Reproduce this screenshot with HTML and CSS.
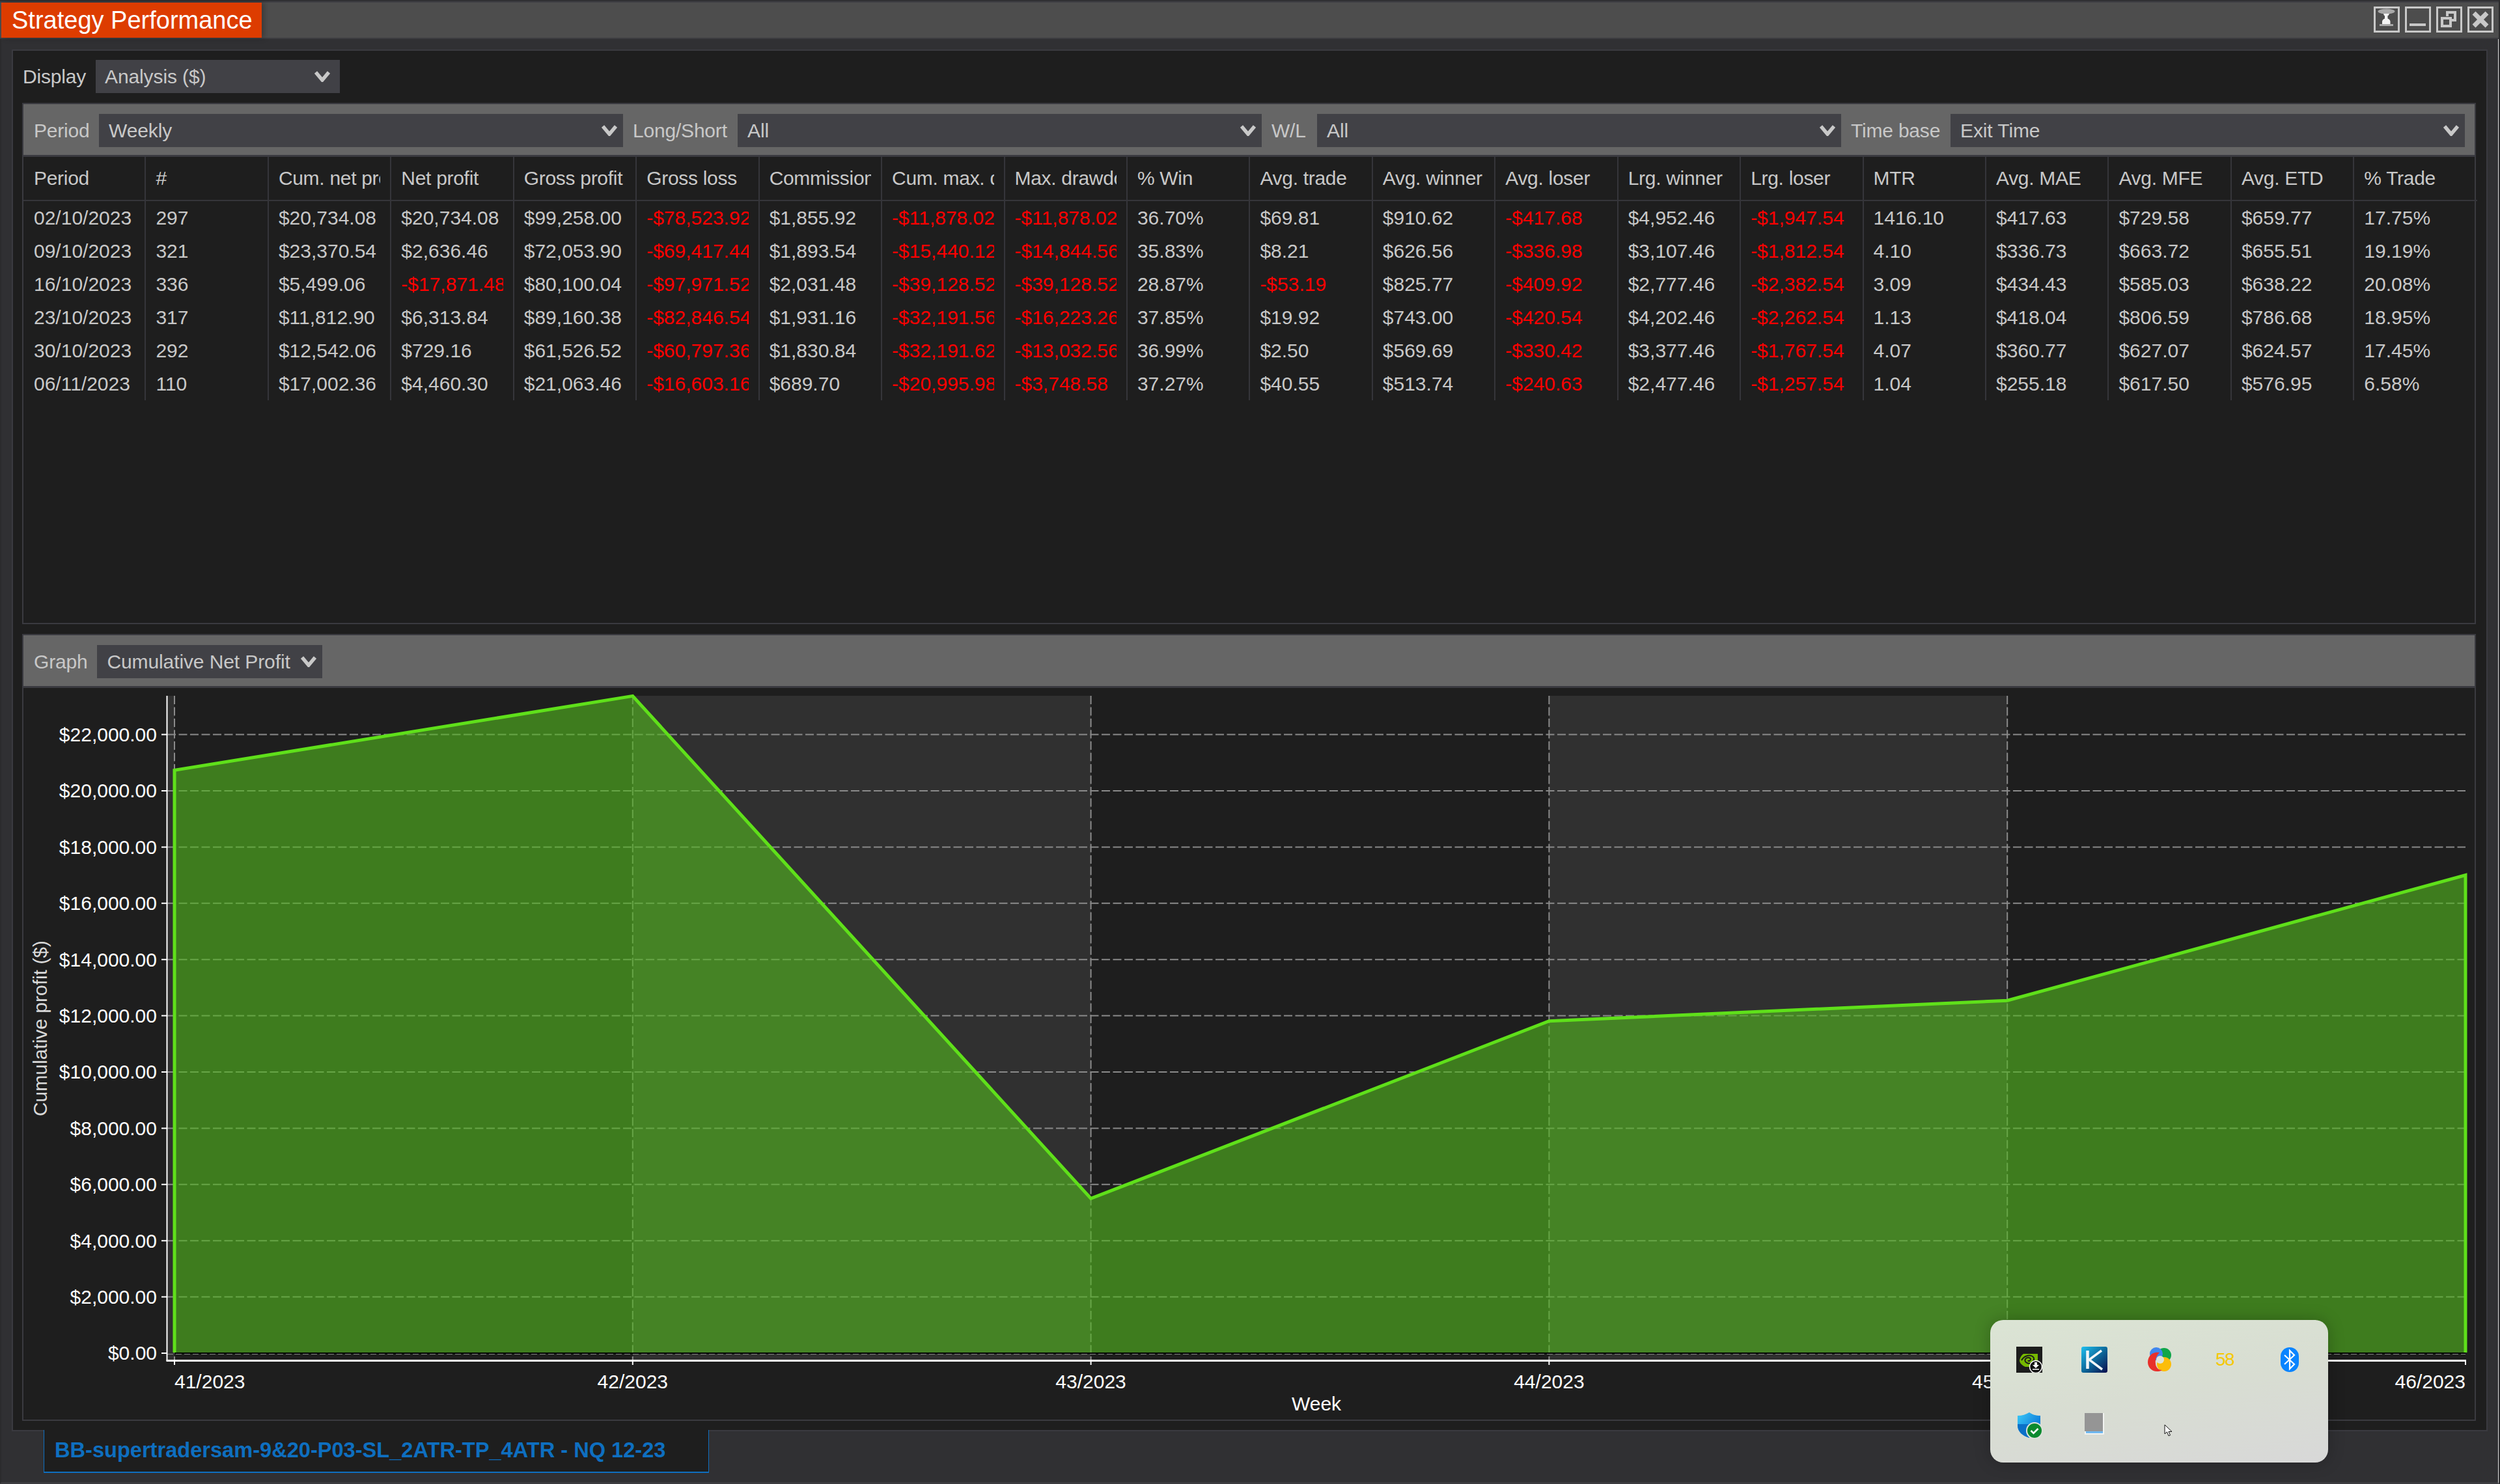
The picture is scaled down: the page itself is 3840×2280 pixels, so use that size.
FILE: index.html
```html
<!DOCTYPE html>
<html>
<head>
    <meta charset="utf-8">
    <title>Strategy Performance</title>
    <link rel="stylesheet" href="styles.css">
</head>
<body>
    <div class="window">
        <header class="title-bar">
            <div class="title-tab">Strategy Performance</div>
            <div class="win-buttons">
                <div class="win-btn">
                    <svg viewBox="3 3 34 34">
                        <ellipse class="pin-cap" cx="19.5" cy="7.5" rx="13" ry="4"/>
                        <path class="pin-body" d="M15 11h9l-1.5 3h-1v4.5c3 1 4 3 4 5V27H13v-3.5c0-2 1-4 4-5V14h-1z"/>
                        <rect class="pin-cap" x="9" y="27" width="21" height="3"/>
                    </svg>
                </div>
                <div class="win-btn">
                    <svg viewBox="3 3 34 34"><rect class="icon-fill" x="7" y="26" width="25" height="4"/></svg>
                </div>
                <div class="win-btn">
                    <svg viewBox="3 3 34 34">
                        <path class="icon-line" d="M17 15V9h12v12h-6"/>
                        <rect class="icon-line" x="9" y="18" width="13" height="12"/>
                    </svg>
                </div>
                <div class="win-btn">
                    <svg viewBox="3 3 34 34"><path class="icon-x" d="M10 10l20 20M30 10L10 30"/></svg>
                </div>
            </div>
        </header>

        <main class="content">
            <div class="frame">
                <div class="display-row">
                    <span class="label">Display</span>
                    <div class="select select-display">
                        <span>Analysis ($)</span>
                        <svg class="chev" viewBox="0 0 24 17"><path d="M2 2l10 12L22 2"/></svg>
                    </div>
                </div>

                <section class="panel table-panel">
                    <div class="bar filter-bar">
                        <span class="label lbl-period">Period</span>
                        <div class="select select-wide">
                            <span>Weekly</span>
                            <svg class="chev" viewBox="0 0 24 17"><path d="M2 2l10 12L22 2"/></svg>
                        </div>
                        <span class="label lbl-side">Long/Short</span>
                        <div class="select select-wide">
                            <span>All</span>
                            <svg class="chev" viewBox="0 0 24 17"><path d="M2 2l10 12L22 2"/></svg>
                        </div>
                        <span class="label lbl-wl">W/L</span>
                        <div class="select select-wide">
                            <span>All</span>
                            <svg class="chev" viewBox="0 0 24 17"><path d="M2 2l10 12L22 2"/></svg>
                        </div>
                        <span class="label lbl-time">Time base</span>
                        <div class="select select-fill">
                            <span>Exit Time</span>
                            <svg class="chev" viewBox="0 0 24 17"><path d="M2 2l10 12L22 2"/></svg>
                        </div>
                    </div>

                    <table class="perf-table">
                        <thead>
                            <tr>
                                <th><div>Period</div></th><th><div>#</div></th><th><div>Cum. net profit</div></th><th><div>Net profit</div></th><th><div>Gross profit</div></th><th><div>Gross loss</div></th><th><div>Commission</div></th><th><div>Cum. max. drawdown</div></th><th><div>Max. drawdown</div></th><th><div>% Win</div></th><th><div>Avg. trade</div></th><th><div>Avg. winner</div></th><th><div>Avg. loser</div></th><th><div>Lrg. winner</div></th><th><div>Lrg. loser</div></th><th><div>MTR</div></th><th><div>Avg. MAE</div></th><th><div>Avg. MFE</div></th><th><div>Avg. ETD</div></th><th><div>% Trade</div></th>
                            </tr>
                        </thead>
                        <tbody>
                            <tr>
                                <td><div>02/10/2023</div></td><td><div>297</div></td><td><div>$20,734.08</div></td><td><div>$20,734.08</div></td><td><div>$99,258.00</div></td><td class="neg"><div>-$78,523.92</div></td><td><div>$1,855.92</div></td><td class="neg"><div>-$11,878.02</div></td><td class="neg"><div>-$11,878.02</div></td><td><div>36.70%</div></td><td><div>$69.81</div></td><td><div>$910.62</div></td><td class="neg"><div>-$417.68</div></td><td><div>$4,952.46</div></td><td class="neg"><div>-$1,947.54</div></td><td><div>1416.10</div></td><td><div>$417.63</div></td><td><div>$729.58</div></td><td><div>$659.77</div></td><td><div>17.75%</div></td>
                            </tr>
                            <tr>
                                <td><div>09/10/2023</div></td><td><div>321</div></td><td><div>$23,370.54</div></td><td><div>$2,636.46</div></td><td><div>$72,053.90</div></td><td class="neg"><div>-$69,417.44</div></td><td><div>$1,893.54</div></td><td class="neg"><div>-$15,440.12</div></td><td class="neg"><div>-$14,844.56</div></td><td><div>35.83%</div></td><td><div>$8.21</div></td><td><div>$626.56</div></td><td class="neg"><div>-$336.98</div></td><td><div>$3,107.46</div></td><td class="neg"><div>-$1,812.54</div></td><td><div>4.10</div></td><td><div>$336.73</div></td><td><div>$663.72</div></td><td><div>$655.51</div></td><td><div>19.19%</div></td>
                            </tr>
                            <tr>
                                <td><div>16/10/2023</div></td><td><div>336</div></td><td><div>$5,499.06</div></td><td class="neg"><div>-$17,871.48</div></td><td><div>$80,100.04</div></td><td class="neg"><div>-$97,971.52</div></td><td><div>$2,031.48</div></td><td class="neg"><div>-$39,128.52</div></td><td class="neg"><div>-$39,128.52</div></td><td><div>28.87%</div></td><td class="neg"><div>-$53.19</div></td><td><div>$825.77</div></td><td class="neg"><div>-$409.92</div></td><td><div>$2,777.46</div></td><td class="neg"><div>-$2,382.54</div></td><td><div>3.09</div></td><td><div>$434.43</div></td><td><div>$585.03</div></td><td><div>$638.22</div></td><td><div>20.08%</div></td>
                            </tr>
                            <tr>
                                <td><div>23/10/2023</div></td><td><div>317</div></td><td><div>$11,812.90</div></td><td><div>$6,313.84</div></td><td><div>$89,160.38</div></td><td class="neg"><div>-$82,846.54</div></td><td><div>$1,931.16</div></td><td class="neg"><div>-$32,191.56</div></td><td class="neg"><div>-$16,223.26</div></td><td><div>37.85%</div></td><td><div>$19.92</div></td><td><div>$743.00</div></td><td class="neg"><div>-$420.54</div></td><td><div>$4,202.46</div></td><td class="neg"><div>-$2,262.54</div></td><td><div>1.13</div></td><td><div>$418.04</div></td><td><div>$806.59</div></td><td><div>$786.68</div></td><td><div>18.95%</div></td>
                            </tr>
                            <tr>
                                <td><div>30/10/2023</div></td><td><div>292</div></td><td><div>$12,542.06</div></td><td><div>$729.16</div></td><td><div>$61,526.52</div></td><td class="neg"><div>-$60,797.36</div></td><td><div>$1,830.84</div></td><td class="neg"><div>-$32,191.62</div></td><td class="neg"><div>-$13,032.56</div></td><td><div>36.99%</div></td><td><div>$2.50</div></td><td><div>$569.69</div></td><td class="neg"><div>-$330.42</div></td><td><div>$3,377.46</div></td><td class="neg"><div>-$1,767.54</div></td><td><div>4.07</div></td><td><div>$360.77</div></td><td><div>$627.07</div></td><td><div>$624.57</div></td><td><div>17.45%</div></td>
                            </tr>
                            <tr>
                                <td><div>06/11/2023</div></td><td><div>110</div></td><td><div>$17,002.36</div></td><td><div>$4,460.30</div></td><td><div>$21,063.46</div></td><td class="neg"><div>-$16,603.16</div></td><td><div>$689.70</div></td><td class="neg"><div>-$20,995.98</div></td><td class="neg"><div>-$3,748.58</div></td><td><div>37.27%</div></td><td><div>$40.55</div></td><td><div>$513.74</div></td><td class="neg"><div>-$240.63</div></td><td><div>$2,477.46</div></td><td class="neg"><div>-$1,257.54</div></td><td><div>1.04</div></td><td><div>$255.18</div></td><td><div>$617.50</div></td><td><div>$576.95</div></td><td><div>6.58%</div></td>
                            </tr>
                        </tbody>
                    </table>
                </section>

                <section class="panel chart-panel">
                    <div class="bar graph-bar">
                        <span class="label">Graph</span>
                        <div class="select select-graph">
                            <span>Cumulative Net Profit</span>
                            <svg class="chev" viewBox="0 0 24 17"><path d="M2 2l10 12L22 2"/></svg>
                        </div>
                    </div>

                    <!-- viewBox uses page coordinates so the plot numbers are easy to check -->
                    <svg class="chart" viewBox="36 1057 3766 1124">
                        <rect class="band" x="257" y="1069" width="11" height="1020"/>
                        <rect class="band" x="971.8" y="1069" width="703.8" height="1020"/>
                        <rect class="band" x="2379.4" y="1069" width="703.8" height="1020"/>

                        <path class="grid" d="M257 1128.6H3787M257 1215H3787M257 1301.4H3787M257 1387.8H3787M257 1474.2H3787M257 1560.6H3787M257 1647H3787M257 1733.4H3787M257 1819.8H3787M257 1906.2H3787M257 1992.6H3787"/>
                        <path class="grid" d="M268 1069V2089M971.8 1069V2089M1675.6 1069V2089M2379.4 1069V2089M3083.2 1069V2089"/>
                        <path class="grid-zero" d="M257 2080.5H3787"/>

                        <path class="area" d="M268 2078V1183.3L971.8 1069.4L1675.6 1841.4L2379.4 1568.7L3083.2 1537.2L3787 1344.5V2078Z"/>
                        <path class="area-base" d="M268 2079H3787"/>
                        <path class="area-line" d="M268 2078V1183.3L971.8 1069.4L1675.6 1841.4L2379.4 1568.7L3083.2 1537.2L3787 1344.5V2078"/>

                        <path class="axis" d="M256.5 1069V2091"/>
                        <path class="axis axis-x" d="M255.5 2090.5H3788"/>
                        <path class="tick" d="M248 1128.6h8M248 1215h8M248 1301.4h8M248 1387.8h8M248 1474.2h8M248 1560.6h8M248 1647h8M248 1733.4h8M248 1819.8h8M248 1906.2h8M248 1992.6h8M248 2079h8"/>
                        <path class="tick" d="M268 2091v6M971.8 2091v6M1675.6 2091v6M2379.4 2091v6M3083.2 2091v6M3787 2091v6"/>

                        <text class="y-label" x="241" y="1139">$22,000.00</text>
                        <text class="y-label" x="241" y="1225.4">$20,000.00</text>
                        <text class="y-label" x="241" y="1311.8">$18,000.00</text>
                        <text class="y-label" x="241" y="1398.2">$16,000.00</text>
                        <text class="y-label" x="241" y="1484.6">$14,000.00</text>
                        <text class="y-label" x="241" y="1571">$12,000.00</text>
                        <text class="y-label" x="241" y="1657.4">$10,000.00</text>
                        <text class="y-label" x="241" y="1743.8">$8,000.00</text>
                        <text class="y-label" x="241" y="1830.2">$6,000.00</text>
                        <text class="y-label" x="241" y="1916.6">$4,000.00</text>
                        <text class="y-label" x="241" y="2003">$2,000.00</text>
                        <text class="y-label" x="241" y="2089.4">$0.00</text>

                        <text class="x-label x-start" x="268" y="2132.5">41/2023</text>
                        <text class="x-label" x="971.8" y="2132.5">42/2023</text>
                        <text class="x-label" x="1675.6" y="2132.5">43/2023</text>
                        <text class="x-label" x="2379.4" y="2132.5">44/2023</text>
                        <text class="x-label" x="3083.2" y="2132.5">45/2023</text>
                        <text class="x-label x-end" x="3787" y="2132.5">46/2023</text>
                        <text class="x-label" x="2022" y="2166.5">Week</text>
                        <text class="y-title" transform="translate(72 1580) rotate(-90)">Cumulative profit ($)</text>
                    </svg>
                </section>
            </div>

            <div class="tab">BB-supertradersam-9&amp;20-P03-SL_2ATR-TP_4ATR - NQ 12-23</div>
        </main>
    </div>

    <!-- system tray overflow popup -->
    <div class="tray">
        <div class="tray-cell">
            <svg class="tray-icon" viewBox="0 0 40 40">
                <rect width="40" height="40" fill="#1c1c1c"/>
                <path d="M11 11H33V31H14C9 29 5 25 5 21C6 16 8 13 11 11Z" fill="#76b900"/>
                <path d="M8 21C12 14 20 12 25 15C29 18 27 24 21 26C16 26 12 23 14 19C16 16 21 16 22 19C22 22 19 23 18 21" fill="none" stroke="#1c1c1c" stroke-width="2"/>
                <circle cx="30" cy="31" r="9.5" fill="#111" stroke="#fff" stroke-width="1.5"/>
                <path d="M28 24h4v4h3l-5 5-5-5h3z" fill="#fff"/>
                <rect x="25" y="34" width="10" height="1.5" fill="#fff"/>
            </svg>
        </div>
        <div class="tray-cell">
            <svg class="tray-icon" viewBox="0 0 40 40">
                <defs>
                    <linearGradient id="kBlue" x1="0" y1="0" x2="1" y2="1">
                        <stop offset="0" stop-color="#1fc0f0"/>
                        <stop offset="0.5" stop-color="#0d6a9c"/>
                        <stop offset="1" stop-color="#0a0d4c"/>
                    </linearGradient>
                </defs>
                <rect width="40" height="40" rx="3" fill="url(#kBlue)"/>
                <path d="M9.5 6V34" fill="none" stroke="#f2f6f8" stroke-width="4.5"/>
                <path d="M31 6L12 20L32 35" fill="none" stroke="#f2f6f8" stroke-width="3.5"/>
            </svg>
        </div>
        <div class="tray-cell">
            <svg class="tray-icon" viewBox="0 0 40 40">
                <circle cx="27" cy="13" r="11" fill="#10a64a"/>
                <circle cx="15" cy="11" r="10" fill="#3f86ee"/>
                <circle cx="27" cy="27" r="11" fill="#fcbd0a"/>
                <path d="M20 9C10 7 2 14 2 24C2 33 10 39 18 38C20 38 22 37 24 36C18 36 14 31 14 26C13 20 15 14 20 9Z" fill="#e8302a"/>
                <circle cx="21" cy="20" r="6" fill="#dde2d9"/>
            </svg>
        </div>
        <div class="tray-cell"><span class="tray-number">58</span></div>
        <div class="tray-cell">
            <svg class="tray-bt" viewBox="0 0 28 38">
                <rect width="28" height="38" rx="14" fill="#0a84ff"/>
                <path d="M6 12L21 26L14 33V5L21 12L6 26" fill="none" stroke="#fff" stroke-width="2.2"/>
            </svg>
        </div>
        <div class="tray-cell">
            <svg class="tray-icon" viewBox="0 0 40 40">
                <defs>
                    <linearGradient id="shieldBlue" x1="0" y1="0" x2="0.8" y2="0.6">
                        <stop offset="0" stop-color="#3ccaf7"/>
                        <stop offset="1" stop-color="#0f7fdc"/>
                    </linearGradient>
                </defs>
                <path d="M20 0C24 3 30 5 37 5V20C37 30 28 36 20 39C10 36 2 30 2 20V5C9 5 15 3 20 0Z" fill="url(#shieldBlue)"/>
                <path d="M2 18H20V39C10 36 2 30 2 20Z" fill="#0b70c8"/>
                <circle cx="28" cy="28" r="13" fill="#dde2da"/>
                <circle cx="28" cy="28" r="11" fill="#0b8a2e"/>
                <path d="M22.5 28l4 4 7-7" fill="none" stroke="#fff" stroke-width="2.6"/>
            </svg>
        </div>
        <div class="tray-cell">
            <svg class="tray-icon" viewBox="0 0 40 40">
                <rect x="5" y="1" width="30" height="33" fill="#f1f3f1"/>
                <rect x="5" y="1" width="28" height="28" fill="#959595"/>
                <rect x="7" y="29" width="26" height="3" fill="#6fb8f0"/>
            </svg>
        </div>
        <svg class="cursor" viewBox="0 0 13 19">
            <path d="M1 1V15L4.5 12L7 18L9.5 17L7 11.5H12Z" fill="#fff" stroke="#111" stroke-width="1"/>
        </svg>
    </div>
</body>
</html>
```

FILE: styles.css
```css
* {
    box-sizing: border-box;
}

html, body {
    margin: 0;
    padding: 0;
}

body {
    width: 3840px;
    height: 2280px;
    overflow: hidden;
    position: relative;
    background: #2b2b2d;
    font-family: "Liberation Sans", Arial, sans-serif;
    font-size: 30px;
    color: #c8c8c8;
}

.window {
    width: 3838px;
    height: 2280px;
    display: flex;
    flex-direction: column;
    padding-top: 2px;
    background: #303033;
}

/* title bar */
.title-bar {
    height: 58px;
    flex: none;
    display: flex;
    align-items: flex-start;
    justify-content: space-between;
    background: #4d4d4d;
    border-top: 2px solid #3f3f44;
    border-bottom: 2px solid #3c3c40;
}

.title-tab {
    height: 54px;
    width: 400px;
    margin-left: 2px;
    padding-left: 16px;
    line-height: 54px;
    font-size: 38px;
    color: #fff;
    background: #dd3c00;
    box-shadow: 4px 0 8px rgba(0,0,0,0.25);
}

.win-buttons {
    display: flex;
    gap: 8px;
    margin: 6px 8px 0 0;
}

.win-btn {
    width: 40px;
    height: 40px;
    border: 3px solid #c8c8c8;
}

.win-btn svg {
    display: block;
    width: 34px;
    height: 34px;
}

.icon-fill {
    fill: #c8c8c8;
}

.icon-line {
    fill: #4d4d4d;
    stroke: #c8c8c8;
    stroke-width: 4;
}

.icon-x {
    fill: none;
    stroke: #c8c8c8;
    stroke-width: 7;
}

.pin-cap {
    fill: #a8a8a8;
}

.pin-body {
    fill: #f4f4f4;
}

/* main area */
.content {
    flex: 1;
    padding: 16px 16px 0 16px;
    border-right: 1px solid #dcdcdc;
    border-bottom: 3px solid #3c3c40;
    border-left: 2px solid #2b2b2d;
    display: flex;
    flex-direction: column;
}

.frame {
    height: 2123px;
    flex: none;
    display: flex;
    flex-direction: column;
    padding: 14px 16px 14px 14px;
    background: #1e1e1e;
    border: 2px solid #3a3a40;
}

.display-row {
    display: flex;
    align-items: center;
    gap: 15px;
    height: 51px;
    margin-bottom: 15px;
    padding-left: 1px;
    flex: none;
}

.label {
    white-space: nowrap;
    flex: none;
    letter-spacing: -0.2px;
}

.lbl-period {
    width: 85px;
}

.lbl-side {
    width: 146px;
}

.lbl-wl {
    width: 55px;
}

.lbl-time {
    width: 138px;
}

.select {
    height: 51px;
    flex: none;
    display: flex;
    align-items: center;
    justify-content: space-between;
    padding: 0 9px 0 15px;
    background: #414146;
    color: #c8c8c8;
    letter-spacing: -0.1px;
}

.select-display {
    width: 375px;
    padding: 0 15px 0 14px;
}

.select-wide {
    width: 805px;
}

.select-fill {
    flex: 1;
}

.select-graph {
    width: 346px;
}

.chev {
    width: 24px;
    height: 17px;
    flex: none;
    margin-top: -1px;
}

.chev path {
    fill: none;
    stroke: #c8c8c8;
    stroke-width: 5.5;
}

.panel {
    border: 2px solid #3a3a40;
    flex: none;
}

.table-panel {
    height: 801px;
    margin-bottom: 15px;
}

.chart-panel {
    flex: 1;
    display: flex;
    flex-direction: column;
}

.bar {
    display: flex;
    align-items: center;
    gap: 15px;
    background: #666;
    border-bottom: 3px solid #3a3a40;
    padding: 15px 15px 12px 16px;
    flex: none;
}

/* table */
.perf-table {
    width: 3769px;
    table-layout: fixed;
    border-collapse: separate;
    border-spacing: 0;
}

.perf-table th,
.perf-table td {
    padding: 0 15px 0 15px;
    border-right: 2px solid #35353a;
    font-weight: normal;
    text-align: left;
    white-space: nowrap;
}

.perf-table th:first-child,
.perf-table td:first-child {
    padding-left: 16px;
}

.perf-table th:last-child,
.perf-table td:last-child {
    border-right: 0;
}

.perf-table th {
    height: 68px;
    border-bottom: 2px solid #35353a;
    letter-spacing: -0.3px;
}

.perf-table td {
    height: 51px;
}

.perf-table th div,
.perf-table td div {
    overflow: hidden;
}

.perf-table .neg {
    color: #ff0000;
}

/* chart */
.chart {
    display: block;
    width: 3766px;
    height: 1124px;
    flex: none;
}

.band {
    fill: #303030;
}

.grid {
    fill: none;
    stroke: #8a8a8a;
    stroke-width: 2;
    stroke-dasharray: 13 4.5;
}

.grid-zero {
    fill: none;
    stroke: #8a8a8a;
    stroke-width: 1;
    stroke-dasharray: 9 4;
}

.area {
    fill: rgba(83,183,30,0.62);
}

.area-base {
    stroke: #000;
    stroke-width: 2;
}

.area-line {
    fill: none;
    stroke: #5fe01a;
    stroke-width: 5;
}

.axis {
    fill: none;
    stroke: #fff;
    stroke-width: 2;
}

.axis-x {
    stroke-width: 3;
}

.tick {
    fill: none;
    stroke: #fff;
    stroke-width: 2;
}

.chart text {
    font-family: "Liberation Sans", Arial, sans-serif;
    font-size: 30px;
    fill: #fff;
}

.chart .y-label {
    text-anchor: end;
}

.chart .x-label {
    text-anchor: middle;
}

.chart .x-start {
    text-anchor: start;
}

.chart .x-end {
    text-anchor: end;
}

.chart .y-title {
    text-anchor: middle;
    fill: #d8d8d8;
}

/* strategy tab under the frame */
.tab {
    width: 1022px;
    height: 66px;
    margin: -2px 0 0 49px;
    padding-left: 16px;
    line-height: 62px;
    font-size: 32.6px;
    font-weight: bold;
    color: #0e6fc0;
    background: #1e1e1e;
    border-left: 1px solid #0e6fc0;
    border-right: 1px solid #0e6fc0;
    border-bottom: 2px solid #0e6fc0;
    white-space: nowrap;
    flex: none;
}

/* tray popup */
.tray {
    position: absolute;
    left: 3057px;
    top: 2028px;
    width: 519px;
    height: 219px;
    padding: 10px 0 0 10px;
    display: grid;
    grid-template-columns: repeat(5, 100px);
    grid-template-rows: repeat(2, 101px);
    border-radius: 20px;
    background: linear-gradient(170deg, #dbe4d4 0%, #d8ddd2 50%, #d8d8d8 100%);
    box-shadow: 0 0 24px rgba(0,0,0,0.25);
}

.tray-cell {
    display: flex;
    align-items: center;
    justify-content: center;
}

.tray-icon {
    width: 40px;
    height: 40px;
    display: block;
}

.tray-bt {
    width: 28px;
    height: 38px;
    display: block;
}

.tray-number {
    font-size: 28px;
    color: #f5c800;
    letter-spacing: -1.5px;
}

.cursor {
    position: absolute;
    left: 267px;
    top: 160px;
    width: 13px;
    height: 19px;
}
```
